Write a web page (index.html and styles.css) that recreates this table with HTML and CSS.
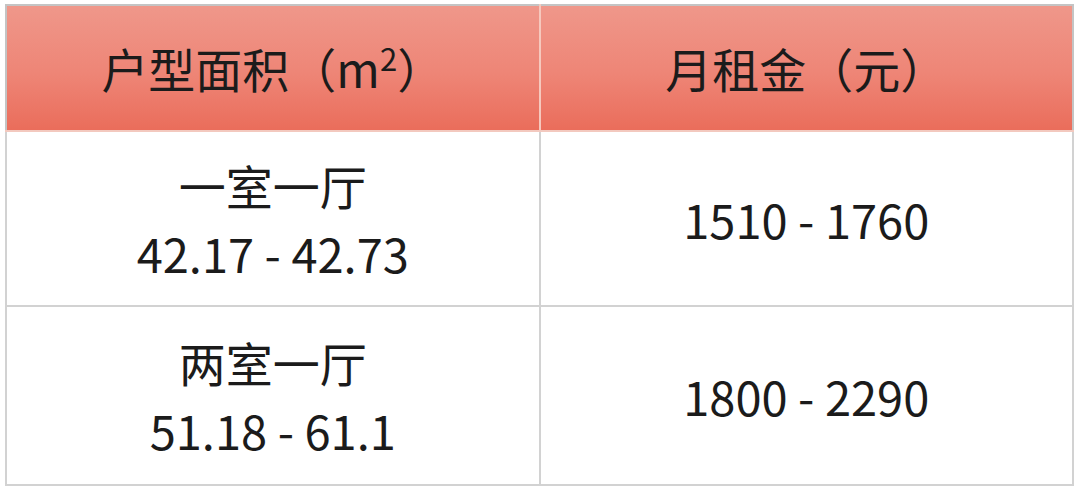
FILE: index.html
```html
<!DOCTYPE html>
<html lang="zh">
<head>
<meta charset="utf-8">
<link rel="stylesheet" href="styles.css">
</head>
<body>
<table class="rent">
  <thead>
    <tr class="head-row">
      <th class="cell head">户型面积（m<sup class="sq">2</sup>）</th>
      <th class="cell head">月租金（元）</th>
    </tr>
  </thead>
  <tbody>
    <tr class="row row-1">
      <td class="cell"><div class="line">一室一厅</div><div class="line">42.17 - 42.73</div></td>
      <td class="cell"><div class="line">1510 - 1760</div></td>
    </tr>
    <tr class="row row-2">
      <td class="cell"><div class="line">两室一厅</div><div class="line">51.18 - 61.1</div></td>
      <td class="cell"><div class="line">1800 - 2290</div></td>
    </tr>
  </tbody>
</table>
</body>
</html>
```
FILE: styles.css
```css
html, body {
  margin: 0;
  padding: 0;
  background: #ffffff;
}
body {
  padding: 4px 0 0 5px;
  font-family: "Noto Sans CJK SC", "Noto Sans", sans-serif;
  color: #1b1b1b;
}
.rent {
  width: 1069px;
  border-collapse: collapse;
  border: 2px solid #c4c4c4;
  table-layout: fixed;
}
.cell {
  text-align: center;
  vertical-align: middle;
  font-size: 47px;
  font-weight: 400;
  padding: 0;
  border: 2px solid #d2d2d2;
}
.head-row {
  height: 126px;
}
.head {
  background: linear-gradient(to bottom, #ef978a 0%, #ee8576 55%, #ea6d5b 100%);
  border-bottom: 2px solid #f3c9bf;
  border-left-color: #f6c8bd;
  border-right-color: #f6c8bd;
  border-top: 2px solid #c4c4c4;
  line-height: 1;
  padding-bottom: 2px;
}
.head:first-child { border-left: 2px solid #c4c4c4; }
.head:last-child { border-right: 2px solid #c4c4c4; }
.sq {
  font-size: 31px;
  vertical-align: 17px;
  line-height: 0;
}
.row-1 { height: 175px; }
.row-2 { height: 179px; }
.line {
  line-height: 68px;
}
```
